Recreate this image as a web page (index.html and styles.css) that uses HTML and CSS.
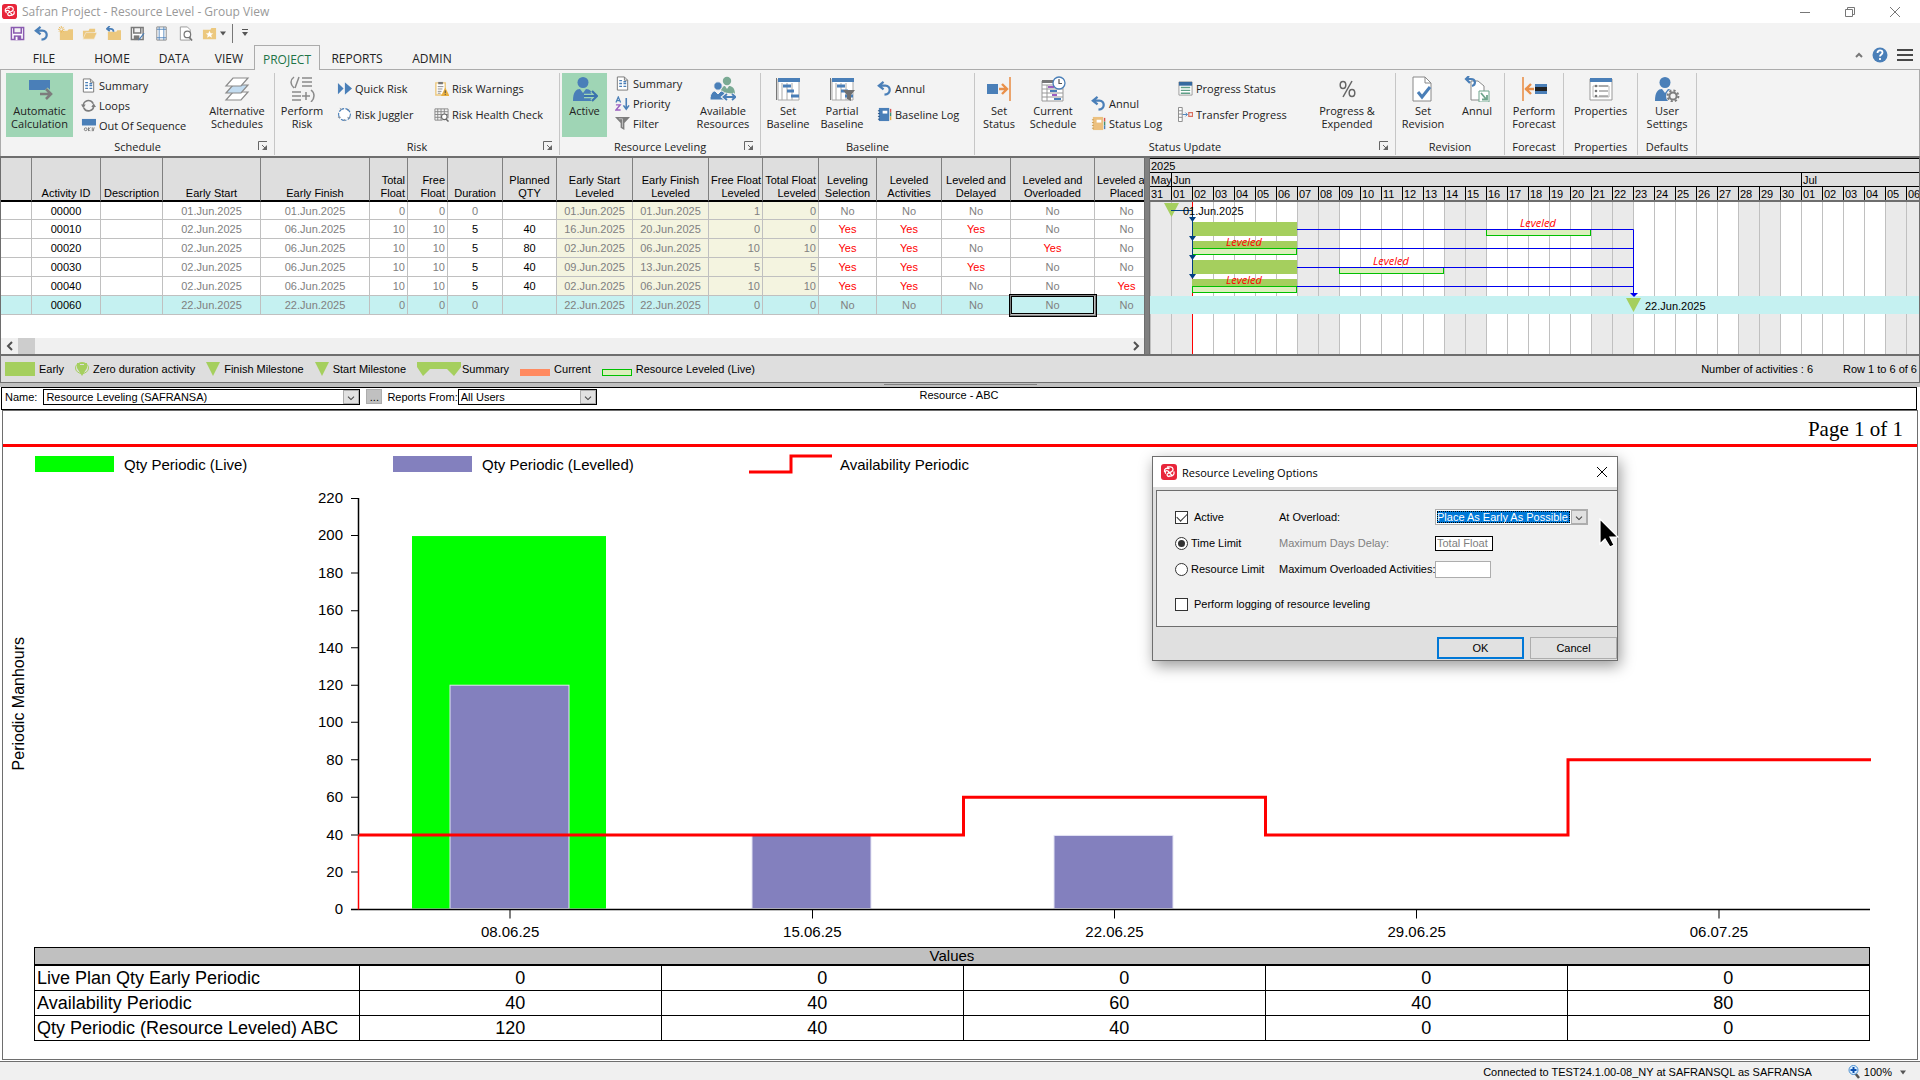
FILE: index.html
```html
<!DOCTYPE html>
<html lang="en">
<head>
    <meta charset="UTF-8">
    <meta name="viewport" content="width=device-width, initial-scale=1.0">
    <title>Safran Project - Resource Level - Group View</title>
    <link rel="stylesheet" href="styles.css">
</head>
<body>
<svg class="sprite" width="0" height="0" aria-hidden="true">
    <symbol id="logo" viewBox="0 0 16 16">
        <rect width="16" height="16" rx="3" fill="#e8253a"/>
        <path d="M3.500 7.500C3 4.500 5.500 3.800 8 4.500M6.500 2.800h3c3 .2 3.500 4 .8 5L7 9.300c-1.800 1-.8 3.200 1 3.200M13 8c.6 3-1.800 4.500-4.500 4M4.500 9.200c-1-2 .8-3 2.500-2.200l4 4.500" fill="none" stroke="#fff" stroke-width="1.300" stroke-linecap="round"/>
    </symbol>
    <symbol id="save" viewBox="0 0 16 16"><path d="M1.500 1.500h13v13h-13zM4 1.500v6h8v-6" fill="#fff" stroke="#8a5bb0" stroke-width="1.600"/><path d="M4 10h8v5H4z" fill="#8a5bb0"/><path d="M6 11.500h2V15H6z" fill="#fff"/></symbol>
    <symbol id="save-as" viewBox="0 0 16 16"><path d="M1.500 1.500h12.500v13H1.500zM4 1.500v6h7.500v-6" fill="#fff" stroke="#7a7a7a" stroke-width="1.600"/><path d="M4 10h6v5H4z" fill="#7a7a7a"/><path d="M15.500 8l-5 6.500-1.500 1 .5-2 5-6z" fill="#4a7fb8"/></symbol>
    <symbol id="undo" viewBox="0 0 16 16"><path d="M7 1L2 5l5 4M2.500 5H9c6 0 6.500 9-1 9.500" fill="none" stroke="#4a7fb8" stroke-width="2.400"/></symbol>
    <symbol id="new-folder" viewBox="0 0 16 16"><path d="M2 5h8l1.500-1.500H16V15H2z" fill="#ecc87e"/><path d="M3.500 0v7M0 3.500h7M1 1l5 5M6 1L1 6" stroke="#e9b95a" stroke-width="1"/><circle cx="3.500" cy="3.500" r="1.200" fill="#f3f3f3"/></symbol>
    <symbol id="open-folder" viewBox="0 0 16 16"><path d="M1 14V5h6l1-2h6v3" fill="#ecc87e"/><path d="M1 14l3-7h12l-3 7z" fill="#ecc87e" stroke="#f3f3f3" stroke-width=".6"/></symbol>
    <symbol id="back-folder" viewBox="0 0 16 16"><path d="M2 6h9l1-1.500h4V15H2z" fill="#ecc87e"/><path d="M4 0L1 3l3 2.500M1.500 3H5c3 0 3 3 3 3" fill="none" stroke="#4a7fb8" stroke-width="1.800"/></symbol>
    <symbol id="page-grid" viewBox="0 0 16 16"><path d="M3 1h10v14H3z" fill="#fff" stroke="#888"/><path d="M5.500 1v14M10.500 1v14M3 3.500h10M3 12.500h10" stroke="#4a7fb8" stroke-width=".9"/></symbol>
    <symbol id="preview" viewBox="0 0 16 16"><path d="M2.500 1H10l3 3v11H2.500z" fill="#fff" stroke="#999"/><circle cx="10" cy="9" r="3.500" fill="#fff" stroke="#777" stroke-width="1.300"/><path d="M12 12l3 3.500" stroke="#777" stroke-width="1.800"/></symbol>
    <symbol id="star-folder" viewBox="0 0 16 16"><path d="M1 4h8l1-2h5v12H1z" fill="#ecc87e"/><path d="M8 5l1.200 2.700 2.800.2-2.200 1.800.8 2.800L8 11l-2.600 1.500.8-2.800L4 7.900l2.800-.2z" fill="#fff"/></symbol>
    <symbol id="doc" viewBox="0 0 16 16"><path d="M2.500 1H10l3.500 3.500V15h-11z" fill="#fff" stroke="#777"/><path d="M10 1v3.500h3.500" fill="none" stroke="#777"/><path d="M4.500 5h3M4.500 8h3M4.500 11h3M9 8h3M9 11h3M9 6h3" stroke="#4a7fb8" stroke-width="1.400"/></symbol>
    <symbol id="loops" viewBox="0 0 16 16"><path d="M2.500 9A5.500 5.500 0 0 1 13 6M13.500 8A5.500 5.500 0 0 1 3 10.500" fill="none" stroke="#7d7d7d" stroke-width="1.700"/><path d="M0 7h5L2.500 11zM11 9.500h5L13.500 5.500z" fill="#7d7d7d"/></symbol>
    <symbol id="sequence" viewBox="0 0 16 16"><path d="M1 1h15v7H1z" fill="#4a7fb8"/><circle cx="5" cy="12" r="1.500" fill="none" stroke="#777"/><path d="M8 10v4M8 12l2-2M8 12l2 2M12 10v4M14 10l-1 4" stroke="#777"/></symbol>
    <symbol id="quick" viewBox="0 0 16 16"><path d="M1 2l6 6-6 6zM8 1l8 7-8 7z" fill="#4a7fb8"/><path d="M8 1v14" stroke="#fff" stroke-width=".7"/></symbol>
    <symbol id="juggler" viewBox="0 0 16 16"><circle cx="8" cy="8" r="6.300" fill="#fff" stroke="#4a7fb8" stroke-width="1.200" stroke-dasharray="6 1.500"/><path d="M3 1l2 2M13 2l-2 2M1 11h3M14 12l-3-1M8 15v-2" stroke="#999"/></symbol>
    <symbol id="warnings" viewBox="0 0 16 16"><path d="M2 2h10v13H2z" fill="#fff" stroke="#ecc87e" stroke-width="1.500"/><path d="M4.500 1h5v2.500h-5z" fill="#777"/><path d="M4 6h6M4 8.500h5M4 11h4M4 13h3" stroke="#888"/><path d="M12 7l4.500 9h-9z" fill="#e9b040"/><path d="M12 10v3M12 14v1" stroke="#444"/></symbol>
    <symbol id="health" viewBox="0 0 16 16"><path d="M1 2h14v10M1 2v12h8M1 5h14M1 8h14M1 11h8M4 2v12M7.500 2v12M11 2v6" fill="none" stroke="#888" stroke-width="1"/><circle cx="11" cy="10.500" r="3" fill="#fff" stroke="#666" stroke-width="1.200"/><path d="M13 13l2.500 2.500" stroke="#666" stroke-width="1.600"/></symbol>
    <symbol id="filter" viewBox="0 0 16 16"><path d="M0 1h16l-6 6.500V15l-4-2.500v-5z" fill="#7d7d7d"/><path d="M4 3h4v9" fill="none" stroke="#c0c0c0"/></symbol>
    <symbol id="book-blue" viewBox="0 0 16 16"><path d="M2 1h11v14H2z" fill="#4a7fb8"/><path d="M6 4h5v3H6z" fill="#fff"/><path d="M1 4h2M1 7h2M1 10h2M1 13h2" stroke="#234f80"/><path d="M14.500 2v4" stroke="#d9534f" stroke-width="1.500"/><path d="M14.500 6v4" stroke="#3f8f6f" stroke-width="1.500"/><path d="M14.500 10v4" stroke="#e9b040" stroke-width="1.500"/></symbol>
    <symbol id="book-tan" viewBox="0 0 16 16"><path d="M2 1h11v14H2z" fill="#ecc07e"/><path d="M6 4h5v3H6z" fill="#fff"/><path d="M1 4h2M1 7h2M1 10h2M1 13h2" stroke="#c99b4f"/><path d="M14.500 2v4" stroke="#d9534f" stroke-width="1.500"/><path d="M14.500 6v4" stroke="#3f8f6f" stroke-width="1.500"/><path d="M14.500 10v4" stroke="#4a7fb8" stroke-width="1.500"/></symbol>
    <symbol id="progress" viewBox="0 0 16 16"><path d="M1 1h14v14H1z" fill="#fff" stroke="#999"/><path d="M1 1h14v4H1z" fill="#35699f"/><path d="M3 7h10M3 10h10M3 13h10" stroke="#5f9f87" stroke-width="1.500"/></symbol>
    <symbol id="transfer" viewBox="0 0 16 16"><path d="M.5.500h4v15h-4zM.5 4h4M.5 7.500h4M.5 11h4" fill="#fff" stroke="#888"/><path d="M5 8h5M8 6l2 2-2 2" fill="none" stroke="#4a7fb8"/><path d="M11.500 6h4v4h-4z" fill="none" stroke="#d9705f" stroke-width="1.300"/></symbol>
    <symbol id="auto" viewBox="0 0 26 26"><path d="M2 4h21v10H2z" fill="#4a7fb8"/><path d="M13 18h10M19 13l5 5-5 5" fill="none" stroke="#9fd5b5" stroke-width="4.500"/><path d="M13 18h10M19 13l5 5-5 5" fill="none" stroke="#7d7d7d" stroke-width="2.600"/></symbol>
    <symbol id="layers" viewBox="0 0 26 26"><g fill="#fff" stroke="#8a8a8a" stroke-width="1.200"><path d="M2 24l7-8h15l-7 8z"/><path d="M2 17l7-8h15l-7 8z" fill="#c3dcf0"/><path d="M2 10l7-8h15l-7 8z"/></g></symbol>
    <symbol id="formula" viewBox="0 0 26 26"><path d="M5 1C1 4 1 8 5 12M10 1L6 12M13 2h10M13 6h10M13 10h10M3 16h9M3 20h9M3 24h9M17 16v8M13 20h8M22 14c4 3 4 8 0 12" fill="none" stroke="#8a8a8a" stroke-width="1.500"/></symbol>
    <symbol id="person" viewBox="0 0 26 26"><circle cx="11" cy="6.500" r="5.500" fill="#4a7fb8"/><path d="M1 25c0-9 3-12 7-12l3 4 3-4c4 0 7 3 7 9l-2 3z" fill="#4a7fb8"/></symbol>
    <symbol id="active" viewBox="0 0 26 26"><use href="#person" width="26" height="26"/><path d="M12 20h13M20 15l5 5-5 5" fill="none" stroke="#9fd5b5" stroke-width="4.500"/><path d="M12 20h12M20 15l5 5-5 5" fill="none" stroke="#3b73ad" stroke-width="2.200"/></symbol>
    <symbol id="people" viewBox="0 0 26 26"><circle cx="17" cy="5" r="4.200" fill="#7aaa94"/><path d="M11 16c0-5 3-6 4-6l2 3 2-3c3 0 6 2 6 8z" fill="#7aaa94"/><circle cx="8" cy="10" r="4.200" fill="#4a7fb8" stroke="#f3f3f3"/><path d="M0 24c0-7 3-9 5-9l3 3 3-3c3 0 5 3 5 9z" fill="#4a7fb8" stroke="#f3f3f3"/><path d="M14 21h11M17 18l-3.500 3 3.500 3M22 18l3.500 3-3.500 3" fill="none" stroke="#f3f3f3" stroke-width="4"/><path d="M14 21h11M17 18l-3.500 3 3.500 3M22 18l3.500 3-3.500 3" fill="none" stroke="#4a7fb8" stroke-width="1.800"/></symbol>
    <symbol id="baseline" viewBox="0 0 26 26"><path d="M3 3h21v21H3zM7 7v17M12 7v17M17 7v17" fill="#fff" stroke="#aaa"/><path d="M3 2h22v4H3z" fill="#4a7fb8"/><path d="M1.500 2v22" stroke="#777"/><path d="M8 10h8M12 15h7M16 20h8" stroke="#4a7fb8" stroke-width="3"/></symbol>
    <symbol id="partial" viewBox="0 0 26 26"><use href="#baseline" width="26" height="26"/><path d="M14 14h12l-4 5v6l-4-2v-4z" fill="#707070"/></symbol>
    <symbol id="set-status" viewBox="0 0 26 26"><path d="M1 8h11v10H1z" fill="#4a7fb8"/><path d="M13 13h7M16 8l5 5-5 5" fill="none" stroke="#e9904a" stroke-width="2.400"/><path d="M24 1v24" stroke="#e9904a" stroke-width="1.600"/></symbol>
    <symbol id="cur-schedule" viewBox="0 0 26 26"><path d="M2 5h21v20H2zM2 9h21M2 13h21M2 17h21M2 21h21M7 9v16" fill="#fff" stroke="#999"/><path d="M2 4h16v3H2z" fill="#777"/><path d="M8 11h6M12 19h5" stroke="#9b5fc0" stroke-width="1.800"/><path d="M10 15h7M14 23h7" stroke="#4a7fb8" stroke-width="1.800"/><circle cx="19" cy="7" r="6" fill="#fff" stroke="#4a7fb8" stroke-width="1.300"/><path d="M19 3v4.500h3" fill="none" stroke="#555" stroke-width="1.200"/></symbol>
    <symbol id="percent" viewBox="0 0 26 26"><ellipse cx="9" cy="9" rx="2.800" ry="3.500" fill="none" stroke="#666" stroke-width="1.500"/><ellipse cx="18" cy="17" rx="2.800" ry="3.500" fill="none" stroke="#666" stroke-width="1.500"/><path d="M18 5L9 21" stroke="#666" stroke-width="1.500"/></symbol>
    <symbol id="set-revision" viewBox="0 0 26 26"><path d="M3 1h12l6 6v18H3z" fill="#fff" stroke="#888"/><path d="M15 1v6h6" fill="none" stroke="#888"/><path d="M8 16l4 5 8-10" fill="none" stroke="#4a7fb8" stroke-width="3"/></symbol>
    <symbol id="annul-revision" viewBox="0 0 26 26"><path d="M7 5h7l6 5v14H7z" fill="#fff" stroke="#888"/><path d="M5 0L2 3l4 4M2 3h5c5 0 5 6 1 7" fill="none" stroke="#4a7fb8" stroke-width="2.200"/><path d="M15 15h10v11H15z" fill="#fff" stroke="#6fa58c"/><path d="M17 17l5 6M23 19v4.500h-5" fill="none" stroke="#6fa58c" stroke-width="1.800"/></symbol>
    <symbol id="forecast" viewBox="0 0 26 26"><path d="M2 1v24" stroke="#e9904a" stroke-width="1.600"/><path d="M4 13h9M10 8l-5 5 5 5" fill="none" stroke="#e9904a" stroke-width="2.400"/><path d="M14 8h12v10H14z" fill="#4a7fb8"/><path d="M14 11h12v4H14z" fill="#222"/></symbol>
    <symbol id="properties" viewBox="0 0 26 26"><path d="M2 3h22v21H2z" fill="#fff" stroke="#999"/><path d="M2 2h22v4H2z" fill="#4a7fb8"/><path d="M5 10h16v11H5z" fill="none" stroke="#bbb"/><circle cx="8" cy="10" r="1.300" fill="#777"/><circle cx="8" cy="15" r="1.300" fill="#777"/><circle cx="8" cy="20" r="1.300" fill="#777"/><path d="M11 10h9M11 15h9M11 20h9" stroke="#777"/></symbol>
    <symbol id="user-settings" viewBox="0 0 26 26"><use href="#person" width="26" height="26"/><circle cx="19" cy="20" r="7" fill="#f3f3f3"/><circle cx="19" cy="20" r="3.600" fill="none" stroke="#7d7d7d" stroke-width="2"/><circle cx="19" cy="20" r="5.400" fill="none" stroke="#7d7d7d" stroke-width="2" stroke-dasharray="2.200 2"/></symbol>
    <symbol id="launcher" viewBox="0 0 10 10"><path d="M.5 9V.5H9" fill="none" stroke="#666"/><path d="M4 4l4 4" stroke="#666"/><path d="M9 4v5H4z" fill="#666"/></symbol>
    <symbol id="down" viewBox="0 0 14 14"><path d="M3.500 6.500L7 10l3.500-3.500" fill="none" stroke="#444" stroke-width="1.200"/></symbol>
    <symbol id="milestone" viewBox="0 0 14 14"><path d="M0 0h14L7 14z" fill="#a5cf5e"/></symbol>
</svg>

<div class="app">
    <header class="titlebar">
        <svg class="icon"><use href="#logo"/></svg>
        <h1>Safran Project - Resource Level - Group View</h1>
        <div class="window-buttons">
            <button aria-label="Minimize"><svg class="icon10" viewBox="0 0 10 10"><path d="M0 5.500h10"/></svg></button>
            <button aria-label="Restore"><svg class="icon10" viewBox="0 0 10 10"><path d="M.5 2.500h7v7h-7zM2.500 2.500v-2h7v7h-2"/></svg></button>
            <button aria-label="Close"><svg class="icon10" viewBox="0 0 10 10"><path d="M0 0l10 10M10 0L0 10"/></svg></button>
        </div>
    </header>

    <div class="quick-access">
        <button aria-label="Save"><svg class="icon"><use href="#save"/></svg></button>
        <button aria-label="Undo"><svg class="icon"><use href="#undo"/></svg></button>
        <button aria-label="New"><svg class="icon"><use href="#new-folder"/></svg></button>
        <button aria-label="Open"><svg class="icon"><use href="#open-folder"/></svg></button>
        <button aria-label="Revert"><svg class="icon"><use href="#back-folder"/></svg></button>
        <button aria-label="Save as"><svg class="icon"><use href="#save-as"/></svg></button>
        <button aria-label="Layout"><svg class="icon"><use href="#page-grid"/></svg></button>
        <button aria-label="Preview"><svg class="icon"><use href="#preview"/></svg></button>
        <button class="favorites" aria-label="Favorites"><svg class="icon"><use href="#star-folder"/></svg><svg class="caret" viewBox="0 0 6 4"><path d="M0 0h6L3 4z"/></svg></button>
        <button class="customize" aria-label="Customize"><svg class="caret" viewBox="0 0 6 8"><path d="M0 0h6v1H0zM0 3h6L3 7z"/></svg></button>
    </div>

    <nav class="tabs">
        <button class="tab file">FILE</button>
        <button class="tab home">HOME</button>
        <button class="tab data">DATA</button>
        <button class="tab view">VIEW</button>
        <button class="tab project">PROJECT</button>
        <button class="tab reports">REPORTS</button>
        <button class="tab admin">ADMIN</button>
        <div class="tab-tools">
            <button aria-label="Collapse ribbon"><svg width="8" height="6" viewBox="0 0 8 6"><path d="M1 5l3-3 3 3" fill="none" stroke="#777" stroke-width="2"/></svg></button>
            <button aria-label="Help"><svg width="16" height="16" viewBox="0 0 16 16"><circle cx="8" cy="8" r="7.500" fill="#4a7fb8"/><path d="M5.500 6c0-3.500 5-3.500 5-.500 0 2-2.500 2-2.500 4M8 11v2" fill="none" stroke="#fff" stroke-width="1.800"/></svg></button>
            <button aria-label="Menu"><svg width="16" height="12" viewBox="0 0 16 12"><path d="M0 1h16M0 6h16M0 11h16" stroke="#111" stroke-width="1.600"/></svg></button>
        </div>
    </nav>

    <div class="ribbon">
        <section class="group schedule">
            <div class="group-body">
                <button class="big on auto"><svg><use href="#auto"/></svg><span>Automatic<br>Calculation</span></button>
                <div class="stack">
                    <button><svg class="icon"><use href="#doc"/></svg>Summary</button>
                    <button><svg class="icon"><use href="#loops"/></svg>Loops</button>
                    <button><svg class="icon"><use href="#sequence"/></svg>Out Of Sequence</button>
                </div>
                <button class="big wide last"><svg><use href="#layers"/></svg><span>Alternative<br>Schedules</span></button>
            </div>
            <footer><span>Schedule</span><button aria-label="Schedule options"><svg><use href="#launcher"/></svg></button></footer>
        </section>
        <section class="group risk">
            <div class="group-body">
                <button class="big"><svg><use href="#formula"/></svg><span>Perform<br>Risk</span></button>
                <div class="stack two">
                    <button><svg class="icon"><use href="#quick"/></svg>Quick Risk</button>
                    <button><svg class="icon"><use href="#juggler"/></svg>Risk Juggler</button>
                </div>
                <div class="stack two">
                    <button><svg class="icon"><use href="#warnings"/></svg>Risk Warnings</button>
                    <button><svg class="icon"><use href="#health"/></svg>Risk Health Check</button>
                </div>
            </div>
            <footer><span>Risk</span><button aria-label="Risk options"><svg><use href="#launcher"/></svg></button></footer>
        </section>
        <section class="group leveling">
            <div class="group-body">
                <button class="big on active"><svg><use href="#active"/></svg><span>Active</span></button>
                <div class="stack high">
                    <button><svg class="icon"><use href="#doc"/></svg>Summary</button>
                    <button><svg class="icon" viewBox="0 0 16 16"><path d="M1 7l2.500-6L6 7M2 5h3" fill="none" stroke="#4a7fb8" stroke-width="1.300"/><path d="M1 9.500h4.500L1 15h5" fill="none" stroke="#9b5fc0" stroke-width="1.500"/><path d="M12 2v11M9 10l3 4 3-4" fill="none" stroke="#4a7fb8" stroke-width="1.700"/></svg>Priority</button>
                    <button><svg class="icon"><use href="#filter"/></svg>Filter</button>
                </div>
                <button class="big wide last"><svg><use href="#people"/></svg><span>Available<br>Resources</span></button>
            </div>
            <footer><span>Resource Leveling</span><button aria-label="Resource leveling options"><svg><use href="#launcher"/></svg></button></footer>
        </section>
        <section class="group base">
            <div class="group-body">
                <button class="big"><svg><use href="#baseline"/></svg><span>Set<br>Baseline</span></button>
                <button class="big"><svg><use href="#partial"/></svg><span>Partial<br>Baseline</span></button>
                <div class="stack two">
                    <button><svg class="icon"><use href="#undo"/></svg>Annul</button>
                    <button><svg class="icon"><use href="#book-blue"/></svg>Baseline Log</button>
                </div>
            </div>
            <footer><span>Baseline</span></footer>
        </section>
        <section class="group status">
            <div class="group-body">
                <button class="big narrow"><svg><use href="#set-status"/></svg><span>Set<br>Status</span></button>
                <button class="big wide"><svg><use href="#cur-schedule"/></svg><span>Current<br>Schedule</span></button>
                <div class="stack low">
                    <button><svg class="icon"><use href="#undo"/></svg>Annul</button>
                    <button><svg class="icon"><use href="#book-tan"/></svg>Status Log</button>
                </div>
                <div class="stack two">
                    <button><svg class="icon"><use href="#progress"/></svg>Progress Status</button>
                    <button><svg class="icon"><use href="#transfer"/></svg>Transfer Progress</button>
                </div>
                <button class="big wide last"><svg><use href="#percent"/></svg><span>Progress &amp;<br>Expended</span></button>
            </div>
            <footer><span>Status Update</span><button aria-label="Status options"><svg><use href="#launcher"/></svg></button></footer>
        </section>
        <section class="group revision">
            <div class="group-body">
                <button class="big"><svg><use href="#set-revision"/></svg><span>Set<br>Revision</span></button>
                <button class="big"><svg><use href="#annul-revision"/></svg><span>Annul</span></button>
            </div>
            <footer><span>Revision</span></footer>
        </section>
        <section class="group single">
            <div class="group-body"><button class="big"><svg><use href="#forecast"/></svg><span>Perform<br>Forecast</span></button></div>
            <footer><span>Forecast</span></footer>
        </section>
        <section class="group single props">
            <div class="group-body"><button class="big wide"><svg><use href="#properties"/></svg><span>Properties</span></button></div>
            <footer><span>Properties</span></footer>
        </section>
        <section class="group single">
            <div class="group-body"><button class="big"><svg><use href="#user-settings"/></svg><span>User<br>Settings</span></button></div>
            <footer><span>Defaults</span></footer>
        </section>
    </div>

    <main class="workspace">
        <div class="grid-pane">
            <table class="activities">
                <colgroup>
                    <col class="w31"><col class="w69"><col class="w62"><col class="w98"><col class="w109"><col class="w38"><col class="w40"><col class="w55"><col class="w54"><col class="w76"><col class="w76"><col class="w54"><col class="w56"><col class="w58"><col class="w65"><col class="w69"><col class="w84"><col class="w64">
                </colgroup>
                <thead>
                    <tr><th></th><th>Activity ID</th><th>Description</th><th>Early Start</th><th>Early Finish</th><th class="num">Total<br>Float</th><th class="num">Free<br>Float</th><th>Duration</th><th>Planned<br>QTY</th><th>Early Start<br>Leveled</th><th>Early Finish<br>Leveled</th><th class="num">Free Float<br>Leveled</th><th class="num">Total Float<br>Leveled</th><th>Leveling<br>Selection</th><th>Leveled<br>Activities</th><th>Leveled and<br>Delayed</th><th>Leveled and<br>Overloaded</th><th>Leveled and<br>Placed</th></tr>
                </thead>
                <tbody>
                    <tr><td></td><td class="edit">00000</td><td></td><td>01.Jun.2025</td><td>01.Jun.2025</td><td class="num">0</td><td class="num">0</td><td>0</td><td></td><td class="lev">01.Jun.2025</td><td class="lev">01.Jun.2025</td><td class="lev num">1</td><td class="lev num">0</td><td>No</td><td>No</td><td>No</td><td>No</td><td>No</td></tr>
                    <tr><td></td><td class="edit">00010</td><td></td><td>02.Jun.2025</td><td>06.Jun.2025</td><td class="num">10</td><td class="num">10</td><td class="edit">5</td><td class="edit">40</td><td class="lev">16.Jun.2025</td><td class="lev">20.Jun.2025</td><td class="lev num">0</td><td class="lev num">0</td><td class="yes">Yes</td><td class="yes">Yes</td><td class="yes">Yes</td><td>No</td><td>No</td></tr>
                    <tr><td></td><td class="edit">00020</td><td></td><td>02.Jun.2025</td><td>06.Jun.2025</td><td class="num">10</td><td class="num">10</td><td class="edit">5</td><td class="edit">80</td><td class="lev">02.Jun.2025</td><td class="lev">06.Jun.2025</td><td class="lev num">10</td><td class="lev num">10</td><td class="yes">Yes</td><td class="yes">Yes</td><td>No</td><td class="yes">Yes</td><td>No</td></tr>
                    <tr><td></td><td class="edit">00030</td><td></td><td>02.Jun.2025</td><td>06.Jun.2025</td><td class="num">10</td><td class="num">10</td><td class="edit">5</td><td class="edit">40</td><td class="lev">09.Jun.2025</td><td class="lev">13.Jun.2025</td><td class="lev num">5</td><td class="lev num">5</td><td class="yes">Yes</td><td class="yes">Yes</td><td class="yes">Yes</td><td>No</td><td>No</td></tr>
                    <tr><td></td><td class="edit">00040</td><td></td><td>02.Jun.2025</td><td>06.Jun.2025</td><td class="num">10</td><td class="num">10</td><td class="edit">5</td><td class="edit">40</td><td class="lev">02.Jun.2025</td><td class="lev">06.Jun.2025</td><td class="lev num">10</td><td class="lev num">10</td><td class="yes">Yes</td><td class="yes">Yes</td><td>No</td><td>No</td><td class="yes">Yes</td></tr>
                    <tr class="current"><td></td><td class="edit">00060</td><td></td><td>22.Jun.2025</td><td>22.Jun.2025</td><td class="num">0</td><td class="num">0</td><td>0</td><td></td><td class="lev">22.Jun.2025</td><td class="lev">22.Jun.2025</td><td class="lev num">0</td><td class="lev num">0</td><td>No</td><td>No</td><td>No</td><td class="focused">No</td><td>No</td></tr>
                </tbody>
            </table>
            <div class="hscroll">
                <button aria-label="Scroll left"><svg viewBox="0 0 8 10"><path d="M6 1L2 5l4 4"/></svg></button>
                <span class="thumb"></span>
                <button aria-label="Scroll right"><svg viewBox="0 0 8 10"><path d="M2 1l4 4-4 4"/></svg></button>
            </div>
        </div>
        <div class="pane-splitter"></div>
        <div class="gantt">
            <div class="scale"><span>2025</span></div>
            <div class="scale months"><span class="may">May</span><span class="jun">Jun</span><span>Jul</span></div>
            <div class="scale days"><span>31</span><span>01</span><span>02</span><span>03</span><span>04</span><span>05</span><span>06</span><span>07</span><span>08</span><span>09</span><span>10</span><span>11</span><span>12</span><span>13</span><span>14</span><span>15</span><span>16</span><span>17</span><span>18</span><span>19</span><span>20</span><span>21</span><span>22</span><span>23</span><span>24</span><span>25</span><span>26</span><span>27</span><span>28</span><span>29</span><span>30</span><span>01</span><span>02</span><span>03</span><span>04</span><span>05</span><span>06</span></div>
            <svg class="bars" aria-label="Gantt bars">
                <defs>
                    <pattern id="week" width="147" height="152" patternUnits="userSpaceOnUse">
                        <rect width="147" height="152" fill="#fff"/>
                        <rect width="42" height="152" fill="#eaeaea"/>
                        <path d="M.5 0v152M21.500 0v152M42.500 0v152M63.500 0v152M84.500 0v152M105.500 0v152M126.500 0v152" stroke="#c0c0c0"/>
                    </pattern>
                </defs>
                <rect width="100%" height="152" fill="url(#week)"/>
                <path d="M42.500 0v152" stroke="red"/>
                <rect y="94" width="100%" height="18" fill="#c5f1f1"/>
                <g fill="#a5cf5e">
                    <rect x="42" y="20" width="105" height="14"/>
                    <rect x="42" y="39" width="105" height="8"/>
                    <rect x="42" y="58" width="105" height="14"/>
                    <rect x="42" y="77" width="105" height="8"/>
                    <path d="M14 1h15l-7.500 14zM476 96h15l-7.500 14z"/>
                </g>
                <g fill="#dcefbd" stroke="#00c000">
                    <rect x="42.500" y="46.500" width="104" height="6"/>
                    <rect x="42.500" y="84.500" width="104" height="6"/>
                    <rect x="336.500" y="27.500" width="104" height="6"/>
                    <rect x="189.500" y="65.500" width="104" height="6"/>
                </g>
                <path d="M147 27.500h336.500V91M147 46.500h336.500M147 65.500h336.500M147 84.500h336.500" fill="none" stroke="#0000ee"/>
                <path d="M480 91h8l-4 4z" fill="#0000ee"/>
                <path d="M21 8.500h21.500V75" fill="none" stroke="#004080"/>
                <path d="M39 15h7l-3.500 5zM39 34h7l-3.500 5zM39 53h7l-3.500 5zM39 72h7l-3.500 5z" fill="#004080"/>
                <text x="33" y="13">01.Jun.2025</text>
                <text x="495" y="108">22.Jun.2025</text>
                <g class="leveled-text"><text x="370" y="25">Leveled</text><text x="76" y="44">Leveled</text><text x="223" y="63">Leveled</text><text x="76" y="82">Leveled</text></g>
            </svg>
        </div>
    </main>

    <div class="legend">
        <span class="key"><i class="swatch early"></i>Early</span>
        <span class="key"><svg viewBox="0 0 14 14"><ellipse cx="7" cy="6" rx="6.500" ry="5.500" fill="none" stroke="#a5cf5e"/><path d="M2 1h10v5l-5 8-5-8z" fill="#a5cf5e"/><path d="M5 2.500h4" stroke="#dedede"/></svg>Zero duration activity</span>
        <span class="key"><svg><use href="#milestone"/></svg>Finish Milestone</span>
        <span class="key"><svg><use href="#milestone"/></svg>Start Milestone</span>
        <span class="key summary"><svg class="bar" viewBox="0 0 44 14"><path d="M0 0h44v5l-7 9-7-7H13l-7 7-6-9z" fill="#a5cf5e"/></svg>Summary</span>
        <span class="key"><i class="swatch now"></i>Current</span>
        <span class="key"><i class="swatch live"></i>Resource Leveled (Live)</span>
        <span class="count">Number of activities : 6</span>
        <span>Row 1 to 6 of 6</span>
    </div>

    <div class="splitter"><span></span></div>

    <form class="report-bar">
        <label for="report-name">Name:</label>
        <div class="combo name"><select id="report-name"><option>Resource Leveling (SAFRANSA)</option></select><svg><use href="#down"/></svg></div>
        <button type="button" class="more">...</button>
        <label for="report-from">Reports From:</label>
        <div class="combo from"><select id="report-from"><option>All Users</option></select><svg><use href="#down"/></svg></div>
        <h2>Resource - ABC</h2>
    </form>

    <section class="report">
        <p class="page-no">Page 1 of 1</p>
        <div class="chart-legend">
            <span><i class="live"></i>Qty Periodic (Live)</span>
            <span><i class="levelled"></i>Qty Periodic (Levelled)</span>
            <span><svg viewBox="0 0 83 20"><path d="M0 18h42V2h41" fill="none" stroke="red" stroke-width="3"/></svg>Availability Periodic</span>
        </div>
        <div class="chart">
            <div class="y-title"><span>Periodic Manhours</span></div>
            <div class="y-labels"><span>220</span><span>200</span><span>180</span><span>160</span><span>140</span><span>120</span><span>100</span><span>80</span><span>60</span><span>40</span><span>20</span><span>0</span></div>
            <!-- 302px per week, 37.36px per 20 manhours -->
            <svg class="plot" viewBox="0 0 1511 411" preserveAspectRatio="none">
                <rect x="53" y="38" width="194" height="372" fill="#00ff00"/>
                <g fill="#8380be" stroke="#e4e4f4"><rect x="91" y="187" width="119" height="223"/><rect x="393" y="337" width="119" height="73"/><rect x="695" y="337" width="119" height="73"/></g>
                <path d="M-8 411H1511M-.5 336V0" fill="none" stroke="#000" stroke-width="1.500"/>
                <path d="M-8 .500H0M-8 37.500H0M-8 75H0M-8 112.500H0M-8 149.500H0M-8 187H0M-8 224H0M-8 261.500H0M-8 299H0M-8 336.500H0M-8 373.500H0M151 411v9M453.500 411v9M755.500 411v9M1057.500 411v9M1360 411v9" stroke="#000"/>
                <path d="M-.5 411V336.500" stroke="red" stroke-width="1.500"/>
                <path d="M0 336.500H604.500V299H906.500V336.500H1209V261.500H1512" fill="none" stroke="red" stroke-width="3"/>
            </svg>
            <div class="x-labels"><span>08.06.25</span><span>15.06.25</span><span>22.06.25</span><span>29.06.25</span><span>06.07.25</span></div>
        </div>
        <div class="values-wrap">
        <table class="values">
            <colgroup><col class="row-name"><col><col><col><col><col></colgroup>
            <thead><tr><th colspan="6">Values</th></tr></thead>
            <tbody>
                <tr><th scope="row">Live Plan Qty Early Periodic</th><td><span>0</span></td><td><span>0</span></td><td><span>0</span></td><td><span>0</span></td><td><span>0</span></td></tr>
                <tr><th scope="row">Availability Periodic</th><td><span>40</span></td><td><span>40</span></td><td><span>60</span></td><td><span>40</span></td><td><span>80</span></td></tr>
                <tr><th scope="row">Qty Periodic (Resource Leveled) ABC</th><td><span>120</span></td><td><span>40</span></td><td><span>40</span></td><td><span>0</span></td><td><span>0</span></td></tr>
            </tbody>
        </table>
        </div>
    </section>

    <footer class="statusbar">
        <span>Connected to TEST24.1.00-08_NY at SAFRANSQL as SAFRANSA</span>
        <button><svg viewBox="0 0 12 14"><path d="M7 8l4 5" stroke="#555" stroke-width="2.500"/><circle cx="5.500" cy="5" r="4.500" fill="#dcefff" stroke="#4a8fd0"/><path d="M5.500 2v6M2.500 5h6" stroke="#0a50b0" stroke-width="2"/></svg>100%</button>
        <button class="zoom-menu" aria-label="Zoom levels"><svg class="caret" viewBox="0 0 6 4"><path d="M0 0h6L3 4z"/></svg></button>
    </footer>
</div>

<form class="dialog" role="dialog" aria-labelledby="dialog-title">
    <div class="dialog-title">
        <svg class="icon"><use href="#logo"/></svg>
        <h2 id="dialog-title">Resource Leveling Options</h2>
        <button type="button" aria-label="Close"><svg class="icon10" viewBox="0 0 10 10"><path d="M0 0l10 10M10 0L0 10"/></svg></button>
    </div>
    <div class="options">
        <label class="check"><input type="checkbox" checked>Active</label>
        <label for="overload">At Overload:</label>
        <div class="combo picked"><select id="overload"><option>Place As Early As Possible</option></select><svg><use href="#down"/></svg></div>
        <label class="check radio"><input type="radio" name="limit" checked>Time Limit</label>
        <label for="delay" class="muted">Maximum Days Delay:</label>
        <input type="text" id="delay" class="muted" value="Total Float">
        <label class="check radio"><input type="radio" name="limit">Resource Limit</label>
        <label for="max-over">Maximum Overloaded Activities:</label>
        <input type="text" id="max-over">
        <label class="check logging"><input type="checkbox">Perform logging of resource leveling</label>
    </div>
    <div class="actions">
        <button type="button" class="default">OK</button>
        <button type="button">Cancel</button>
    </div>
    <svg class="pointer" viewBox="0 0 20 30"><path d="M1 1v25l5-5 5 8 4-2-4-8h8z" fill="#000" stroke="#fff" stroke-width="1.200"/></svg>
</form>
</body>
</html>
```

FILE: styles.css
```css
* {
    box-sizing: border-box;
}
body {
    margin: 0;
    font-family: "Liberation Sans", Arial, sans-serif;
    font-size: 11px;
    color: #000;
    background: #fff;
}
h1, h2, p {
    margin: 0;
    font-size: inherit;
    font-weight: normal;
}
button, select, input {
    font: inherit;
    color: inherit;
    margin: 0;
    padding: 0;
    border: 0;
    background: none;
}
svg {
    display: block;
    flex: none;
}
.sprite {
    position: absolute;
}
.app {
    display: flex;
    flex-direction: column;
    height: 100vh;
    min-height: 900px;
    overflow: hidden;
}
.icon {
    width: 15px;
    height: 15px;
}
.icon10 {
    width: 10px;
    height: 10px;
    fill: none;
    stroke: #777;
    overflow: visible;
}
.caret {
    width: 6px;
    height: 5px;
    fill: #555;
}

/* title bar, quick access and tabs */
.titlebar, .quick-access, .tabs, .ribbon, .dialog-title {
    font-family: "Open Sans", "Segoe UI", sans-serif;
}
.titlebar {
    display: flex;
    align-items: center;
    gap: 5px;
    height: 23px;
    padding: 0 20px 0 2px;
    font-size: 12px;
    color: #999;
}
.window-buttons {
    display: flex;
    gap: 35px;
    margin-left: auto;
}
.quick-access {
    display: flex;
    align-items: center;
    gap: 9px;
    height: 22px;
    padding: 0 0 2px 10px;
    background: #f3f3f3;
}
.favorites {
    display: flex;
    align-items: center;
    gap: 3px;
    padding-right: 6px;
    border-right: 1px solid #777;
    height: 19px;
}
.customize .caret {
    height: 8px;
}
.tabs {
    display: flex;
    height: 25px;
    padding-left: 8px;
    background: #f3f3f3;
    border-bottom: 1px solid #ababab;
}
.tab {
    height: 25px;
    padding-top: 2px;
    font-size: 12px;
    color: #222;
}
.file { width: 72px; }
.home { width: 64px; }
.data { width: 60px; }
.view { width: 50px; }
.project { width: 66px; }
.reports { width: 74px; }
.admin { width: 76px; }
.tab.project {
    color: #217346;
    background: #f3f3f3;
    border: 1px solid #ababab;
    border-bottom: 0;
}
.tab-tools {
    display: flex;
    align-items: center;
    gap: 9px;
    margin-left: auto;
    padding-right: 7px;
    height: 19px;
}

/* ribbon */
.ribbon {
    display: flex;
    height: 86px;
    padding: 3px 0 1px;
    border: 1px solid #ababab;
    border-width: 0 1px;
    background: #f3f3f3;
    color: #222;
    flex: none;
}
.group {
    display: flex;
    flex-direction: column;
    border-right: 1px solid #c6c6c6;
}
.schedule { width: 274px; }
.risk { width: 285px; }
.leveling { width: 201px; }
.base { width: 214px; }
.status { width: 421px; }
.revision { width: 109px; }
.single { width: 59px; }
.props { width: 74px; }
.group-body {
    display: flex;
    height: 64px;
}
.single .group-body {
    justify-content: center;
}
.group footer {
    display: grid;
    grid-template-columns: 16px 1fr 16px;
    align-items: center;
    height: 19px;
    text-align: center;
}
.group footer span {
    grid-column: 2;
    white-space: nowrap;
}
.single footer {
    grid-template-columns: 0 1fr 0;
}
.group footer svg {
    width: 10px;
    height: 10px;
}
.big {
    display: flex;
    flex-direction: column;
    align-items: center;
    gap: 2px;
    width: 54px;
    height: 64px;
    padding-top: 3px;
    line-height: 13px;
    white-space: nowrap;
}
.big svg {
    width: 26px;
    height: 26px;
}
.big.wide { width: 60px; }
.big.narrow { width: 48px; }
.big.auto { width: 67px; margin-left: 5px; }
.big.active { width: 45px; margin-left: 2px; }
.big.last { margin-left: auto; margin-right: 7px; }
.status .big.last { margin-right: 18px; }
.on {
    background: #9fd5b5;
}
.stack {
    display: flex;
    flex-direction: column;
    padding: 2px 0 0 8px;
}
.stack.high { padding-top: 0; }
.stack.low { padding-top: 20px; width: 87px; }
.risk .stack { min-width: 97px; }
.stack button {
    display: flex;
    align-items: center;
    gap: 3px;
    height: 20px;
    white-space: nowrap;
}
.stack.two button {
    height: 26px;
}

/* activity grid and gantt */
.workspace {
    display: flex;
    flex: none;
    height: 200px;
    border: 2px solid #6e6e6e;
    border-width: 2px 1px 2px 1px;
}
.grid-pane {
    display: flex;
    flex-direction: column;
    flex: 0 1 1143px;
    min-width: 0;
    overflow: hidden;
}
.activities {
    table-layout: fixed;
    width: 1158px;
    border-spacing: 0;
    text-align: center;
    color: #808080;
}
.w31 { width: 31px; }
.w38 { width: 38px; }
.w40 { width: 40px; }
.w54 { width: 54px; }
.w55 { width: 55px; }
.w56 { width: 56px; }
.w58 { width: 58px; }
.w62 { width: 62px; }
.w64 { width: 64px; }
.w65 { width: 65px; }
.w69 { width: 69px; }
.w76 { width: 76px; }
.w84 { width: 84px; }
.w98 { width: 98px; }
.w109 { width: 109px; }
.activities th {
    height: 44px;
    padding: 0 2px;
    vertical-align: bottom;
    font-weight: normal;
    line-height: 13px;
    white-space: nowrap;
    color: #000;
    background: #dedede;
    border-right: 1px solid #808080;
    border-bottom: 2px solid #000;
}
.activities td {
    height: 19px;
    padding: 0 2px;
    line-height: 16px;
    border-right: 1px solid #c0c0c0;
    border-bottom: 1px solid #c0c0c0;
}
.activities tbody tr:first-child td {
    height: 18px;
}
.activities .num {
    text-align: right;
}
.activities .edit {
    color: #000;
}
.activities .yes {
    color: #f00;
}
.activities .lev {
    background: #f4f4e0;
}
.activities .current td {
    background: #c5f1f1;
}
.activities .focused {
    position: relative;
    z-index: 1;
    box-shadow: inset 0 0 0 1px #000, 0 0 0 1px #808080, 0 0 0 2px #000;
}
.hscroll {
    display: flex;
    align-items: center;
    height: 16px;
    margin-top: auto;
    background: #f0f0f0;
}
.hscroll button {
    width: 17px;
}
.hscroll button:last-child {
    margin-left: auto;
}
.hscroll svg {
    width: 8px;
    height: 10px;
    margin: 0 auto;
    fill: none;
    stroke: #505050;
    stroke-width: 2;
}
.thumb {
    width: 17px;
    height: 16px;
    background: #cdcdcd;
}
.pane-splitter {
    width: 6px;
    background: #808080;
    border: 1px solid #6e6e6e;
    border-width: 0 1px;
}
.gantt {
    flex: 1;
    min-width: 0;
    overflow: hidden;
}
.scale {
    height: 14px;
    display: flex;
    overflow: hidden;
    line-height: 14px;
    background: #dedede;
    border-top: 1px solid #000;
}
.scale span {
    padding-left: 1px;
    border-left: 1px solid #000;
    white-space: nowrap;
}
.scale span:first-child {
    border-left: 0;
}
.months .may { width: 21px; }
.months .jun { width: 630px; }
.days span {
    flex: 0 0 21px;
}
.days {
    height: 16px;
    border-bottom: 2px solid #6e6e6e;
}
.bars {
    width: 100%;
    height: 152px;
}
.leveled-text {
    font-family: "Open Sans", "Segoe UI", sans-serif;
    font-style: italic;
    fill: #f00;
}
.legend {
    display: flex;
    align-items: center;
    flex: none;
    height: 27px;
    padding: 0 2px 0 4px;
    background: #dedede;
    border: 1px solid #6e6e6e;
    border-width: 0 1px 1px;
    white-space: nowrap;
}
.key {
    display: flex;
    align-items: center;
    gap: 4px;
    margin-right: 11px;
}
.key svg {
    width: 14px;
    height: 14px;
}
.summary {
    gap: 1px;
}
.key .bar {
    width: 44px;
}
.swatch {
    width: 30px;
    height: 14px;
    background: #a5cf5e;
}
.swatch.now {
    height: 7px;
    margin-top: 7px;
    background: #ff8a60;
}
.swatch.live {
    height: 7px;
    margin-top: 7px;
    background: #dcefbd;
    border: 1px solid #00c000;
}
.count {
    margin-left: auto;
    margin-right: 30px;
}
.splitter {
    flex: none;
    height: 4px;
    background: #c0c0c0;
}
.splitter span {
    display: block;
    width: 153px;
    height: 2px;
    margin: 0 auto;
    border-bottom: 1px solid #808080;
}

/* report selection */
.report-bar {
    display: flex;
    flex: none;
    height: 23px;
    margin: 0 3px 0 1px;
    padding: 1px 3px;
    border: 1px solid #000;
    line-height: 17px;
    white-space: nowrap;
    position: relative;
}
.combo {
    display: flex;
    height: 16px;
    border: 1px solid #000;
}
.combo select {
    flex: 1;
    min-width: 0;
    appearance: none;
    padding-left: 2px;
    line-height: 14px;
}
.combo svg {
    width: 16px;
    height: 14px;
    background: #e1e1e1;
    border: 1px solid #adadad;
}
.combo.name {
    width: 317px;
    margin: 0 6px;
}
.combo.from {
    width: 139px;
}
.more {
    width: 16px;
    height: 15px;
    margin-right: 5px;
    line-height: 10px;
    background: #c0c0c0;
    border: 1px solid #adadad;
}
.report-bar h2 {
    position: absolute;
    inset: -1px 0 auto;
    text-align: center;
    pointer-events: none;
}

/* histogram */
.report {
    display: flex;
    flex-direction: column;
    flex: 1;
    min-height: 0;
    margin: 0 2px 1px 2px;
    padding-bottom: 18px;
    border: 1px solid #6e6e6e;
    font-size: 15px;
}
.page-no {
    height: 36px;
    padding-right: 14px;
    border-bottom: 3px solid #f00;
    font-family: "Liberation Serif", "Times New Roman", serif;
    font-size: 21px;
    line-height: 37px;
    text-align: right;
}
.chart-legend {
    display: flex;
    margin: 8px 0 0 32px;
}
.chart-legend span {
    display: flex;
    align-items: center;
    gap: 10px;
    width: 358px;
    height: 18px;
}
.chart-legend i {
    width: 79px;
    height: 16px;
    background: #0f0;
}
.chart-legend .levelled {
    background: #8380be;
}
.chart-legend svg {
    width: 83px;
    height: 20px;
    margin: 0 -2px;
}
.chart {
    display: grid;
    grid-template: minmax(0, 1fr) 37px / 32px 324px minmax(0, 1fr);
    flex: 1;
    min-height: 0;
    padding: 25px 47px 0 0;
}
.y-title {
    display: flex;
    align-items: center;
    justify-content: center;
    font-size: 16px;
}
.y-title span {
    writing-mode: vertical-rl;
    transform: rotate(180deg);
}
.y-labels {
    display: flex;
    flex-direction: column;
    justify-content: space-between;
    margin: -9px 16px -9px 0;
    line-height: 18px;
    text-align: right;
}
.plot {
    width: 100%;
    height: 100%;
    overflow: visible;
}
.x-labels {
    grid-column: 3;
    display: grid;
    grid-template-columns: repeat(5, 1fr);
    padding-top: 13px;
    line-height: 18px;
    text-align: center;
}
.values-wrap {
    margin: 0 47px 0 31px;
}
.values {
    table-layout: fixed;
    width: 100%;
    border-collapse: collapse;
    font-size: 18px;
    line-height: 24px;
}
.row-name {
    width: 325px;
}
.values th, .values td {
    height: 25px;
    padding: 0 2px;
    border: 1px solid #000;
    font-weight: normal;
    text-align: left;
    white-space: nowrap;
}
.values thead th {
    height: 18px;
    font-size: 15px;
    line-height: 16px;
    text-align: center;
    background: #c0c0c0;
    border-bottom-width: 2px;
}
.values td span {
    display: block;
    width: 55%;
    text-align: right;
}
.statusbar {
    display: flex;
    align-items: center;
    flex: none;
    height: 19px;
    padding: 2px 14px 0 0;
    background: #f0f0f0;
    border-top: 1px solid #6e6e6e;
}
.statusbar span {
    margin-left: auto;
    margin-right: 36px;
}
.statusbar button {
    display: flex;
    align-items: center;
    gap: 4px;
}
.statusbar button svg:not(.caret) {
    width: 12px;
    height: 14px;
}
.zoom-menu {
    margin-left: 8px;
}

/* leveling options window */
.dialog {
    position: absolute;
    left: 1152px;
    top: 456px;
    width: 466px;
    height: 205px;
    background: #e0e0e0;
    border: 1px solid #6e6e6e;
    box-shadow: 2px 5px 14px rgba(0, 0, 0, 0.4);
}
.dialog-title {
    display: flex;
    align-items: center;
    gap: 5px;
    height: 30px;
    padding: 0 10px 0 8px;
    background: #fff;
}
.dialog-title button {
    margin-left: auto;
}
.dialog-title .icon {
    width: 16px;
    height: 16px;
}
.dialog-title .icon10 {
    stroke: #000;
}
.options {
    display: grid;
    grid-template: repeat(3, 26px) 36px / 104px 156px 1fr;
    align-items: center;
    justify-items: start;
    height: 137px;
    margin: 3px 0 0 3px;
    padding: 13px 0 0 18px;
    background: #f0f0f0;
    border: 1px solid #6e6e6e;
    border-right: 0;
    white-space: nowrap;
}
.check {
    display: flex;
    align-items: center;
    gap: 6px;
}
.radio {
    gap: 3px;
}
.logging {
    grid-column: 1 / 4;
    margin-top: 8px;
}
.check input {
    display: grid;
    place-content: center;
    appearance: none;
    width: 13px;
    height: 13px;
    border: 1px solid #333;
    background: #fff;
}
.check [type="checkbox"]:checked::after {
    content: "";
    width: 9px;
    height: 5px;
    margin-bottom: 3px;
    border: solid #333;
    border-width: 0 0 1px 1px;
    transform: rotate(-45deg);
}
.check [type="radio"] {
    border-radius: 50%;
}
.check [type="radio"]:checked::after {
    content: "";
    width: 7px;
    height: 7px;
    border-radius: 50%;
    background: #333;
}
.muted {
    color: #808080;
}
.options [type="text"] {
    width: 56px;
    height: 17px;
    padding: 0 1px;
    background: #fff;
    border: 1px solid #adadad;
}
.options .muted[type="text"] {
    width: 58px;
    height: 15px;
    border-color: #000;
}
.picked {
    width: 153px;
    padding: 0 0 0 1px;
    border-color: #adadad;
    background: #fff;
}
.picked select {
    padding-left: 0;
    margin: 1px 1px 1px 0;
    line-height: 11px;
    color: #fff;
    background: #0078d7;
    outline: 1px dotted #000;
    outline-offset: -1px;
}
.actions {
    display: flex;
    justify-content: flex-end;
    gap: 6px;
    padding: 10px 0 0;
}
.actions button {
    width: 87px;
    height: 22px;
    background: #e1e1e1;
    border: 1px solid #adadad;
}
.actions .default {
    border: 2px solid #0078d7;
}
.pointer {
    position: absolute;
    left: 446px;
    top: 61px;
    width: 20px;
    height: 30px;
}
```
